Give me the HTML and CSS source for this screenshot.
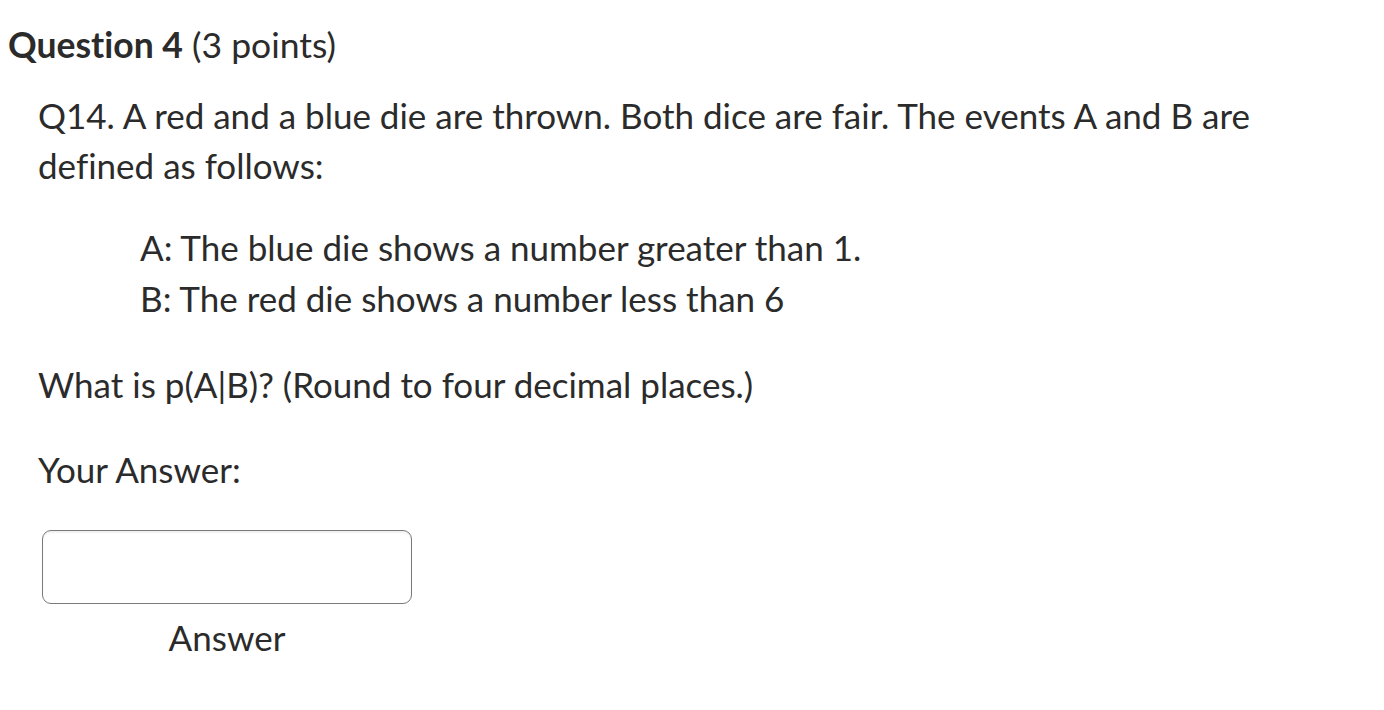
FILE: index.html
```html
<!DOCTYPE html>
<html>
<head>
<meta charset="utf-8">
<link rel="stylesheet" href="styles.css">
</head>
<body>
<div class="question">
  <h2 class="q-title"><span class="q-num">Question 4</span> <span class="q-points">(3 points)</span></h2>
  <div class="q-body">
    <p class="q-text">Q14. A red and a blue die are thrown. Both dice are fair. The events A and B are defined as follows:</p>
    <div class="events">
      <p class="event">A: The blue die shows a number greater than 1.</p>
      <p class="event">B: The red die shows a number less than 6</p>
    </div>
    <p class="q-ask">What is p(A|B)? (Round to four decimal places.)</p>
    <p class="q-label">Your Answer:</p>
    <div class="answer">
      <input class="answer-input" type="text" aria-label="Answer">
      <div class="answer-caption">Answer</div>
    </div>
  </div>
</div>
</body>
</html>
```
FILE: styles.css
```css
html, body {
  margin: 0;
  padding: 0;
  background: #ffffff;
}
body {
  font-family: Lato, "Noto Sans", sans-serif;
  color: #2b2b2b;
  font-variant-ligatures: none;
  font-feature-settings: "liga" 0, "dlig" 0;
}
.question {
  padding: 25px 0 0 8px;
}
.q-title {
  margin: 0;
  font-size: 35.5px;
  line-height: 40px;
  font-weight: normal;
}
.q-num {
  font-weight: bold;
}
.q-body {
  padding: 25px 0 0 30px;
  width: 1240px;
}
.q-text {
  margin: 0;
  font-size: 35px;
  line-height: 50px;
}
.events {
  padding: 32px 0 0 102px;
}
.event {
  margin: 0;
  font-size: 35px;
  line-height: 51px;
}
.q-ask {
  margin: 35px 0 0 0;
  font-size: 35px;
  line-height: 50px;
}
.q-label {
  margin: 35px 0 0 0;
  font-size: 35px;
  line-height: 50px;
}
.answer {
  margin-top: 36px;
  margin-left: 4px;
  width: 370px;
  display: flex;
  flex-direction: column;
  align-items: center;
}
.answer-input {
  box-sizing: border-box;
  width: 370px;
  height: 74px;
  border: 1px solid #7a7a7a;
  border-radius: 9px;
  box-shadow: inset 0 2px 2px rgba(0,0,0,0.06);
  background: #fff;
  margin: 0;
}
.answer-caption {
  margin-top: 13px;
  font-size: 35px;
  line-height: 40px;
}
```
